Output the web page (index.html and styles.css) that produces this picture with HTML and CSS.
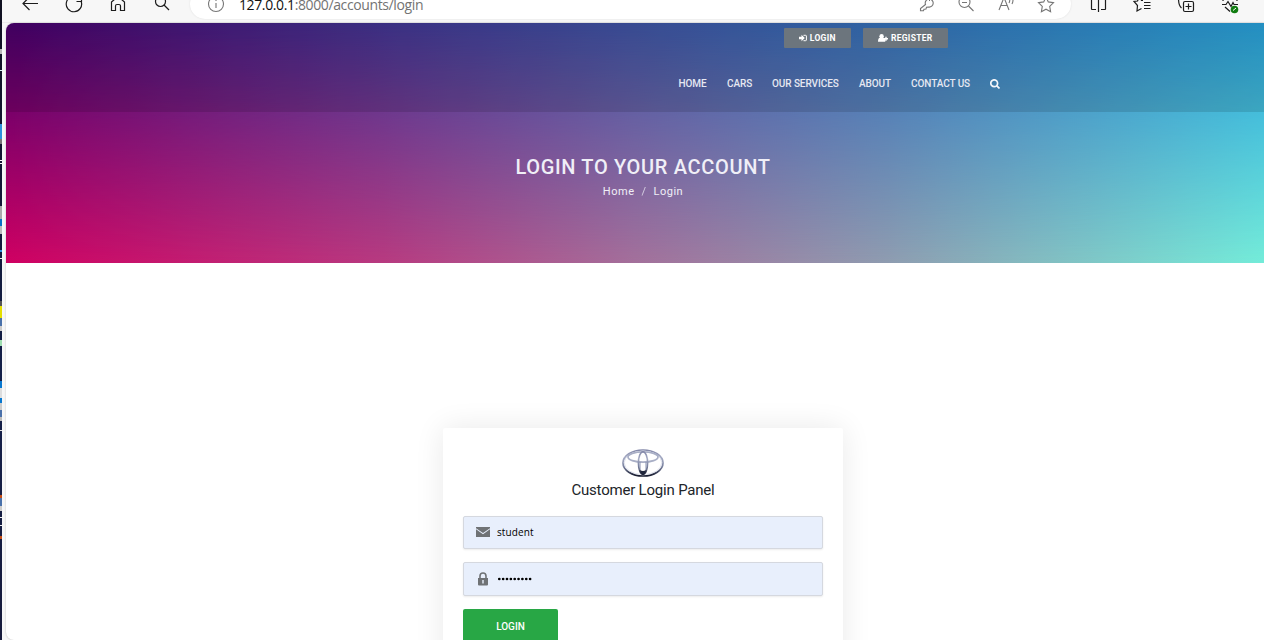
FILE: index.html
```html
<!DOCTYPE html>
<html lang="en">
<head>
<meta charset="utf-8">
<title>Login</title>
<link rel="stylesheet" href="styles.css">
</head>
<body>
<div class="screen">
  <div class="desktop-edge"></div>
  <div class="browser">
    <div class="chrome">
      <div class="toolbar">
        <svg class="tool dark" viewBox="0 0 20 20"><path d="M18 9.500H3M9.500 3L3 9.500l6.500 6.500"/></svg>
        <svg class="tool dark" viewBox="0 0 20 20"><path d="M17.200 7.500a7.700 7.700 0 1 1-3.200-4M17.500 2.500v5h-5"/></svg>
        <svg class="tool dark" viewBox="0 0 20 20"><path d="M3.500 8L10 2.500 16.500 8v8.500h-4V12a1.500 1.500 0 0 0-1.500-1.500H9A1.500 1.500 0 0 0 7.500 12v4.500h-4z"/></svg>
        <svg class="tool dark" viewBox="0 0 20 20"><circle cx="8.500" cy="7.500" r="5"/><path d="M12 11l5 5"/></svg>
        <div class="address">
          <svg class="tool" viewBox="0 0 20 20"><circle cx="10" cy="10" r="7.500"/><path d="M10 9v5M10 5.500v1.500"/></svg>
          <div class="url"><b>127.0.0.1</b>:8000/accounts/login</div>
          <svg class="tool" viewBox="0 0 20 20"><path d="M9.500 10.500a4 4 0 1 1 3 2.500l-2 .2-.5 1.800-2 .2-.5 1.500H4.500V14.500zM13 6.500h1"/></svg>
          <svg class="tool" viewBox="0 0 20 20"><circle cx="8.500" cy="8" r="5.500"/><path d="M12.500 12l5 5M6 8.500h5"/></svg>
          <svg class="tool" viewBox="0 0 20 20"><path d="M3 16L8 3.500 13 16M5 11.500h6M13 4q1.500 2 0 5M16 3q2 3 0 7"/></svg>
          <svg class="tool" viewBox="0 0 20 20"><path d="M10 3l2.300 4.900 5.200.8-3.800 3.700.9 5.300-4.600-2.500-4.600 2.500.9-5.300L2.500 8.700l5.200-.8z"/></svg>
        </div>
        <svg class="tool dark" viewBox="0 0 20 20"><path d="M8 3.500H3.500V15q0 .5.500.5h4M13 3.500h4.500V15q0 .5-.5.500h-4M10.500 2v16"/></svg>
        <svg class="tool dark" viewBox="0 0 20 20"><path d="M11 6.500H9.500L7.500 2.500 5.500 7l-3.500.5L5.500 11.500l-.5 5.500 4.500-2.500M12 8.500h6.500M12 11.500h6.500M12 14.500h6.500"/></svg>
        <svg class="tool dark" viewBox="0 0 20 20"><path d="M9 7.500h7q1.500 0 1.500 1.500v7q0 1.500-1.500 1.500H9q-1.500 0-1.500-1.500V9q0-1.500 1.500-1.500zM12.500 9.500v6M9.500 12.500h6M2.500 4.500q0 7 3 9.500"/></svg>
        <svg class="tool dark" viewBox="0 0 20 20"><path d="M2 10.500h4l2-3 3 5 2-4 1 2h4M5 13l5 4.500M3 7q0-5 7-3 7-2 7 3"/><circle class="ok" cx="14.500" cy="15.500" r="3.800"/><path class="tick" d="M13 16.500l3-2.500"/></svg>
      </div>
    </div>
    <div class="page">
      <header class="hero">
        <div class="topbar">
          <div class="auth">
            <a class="pill-btn"><svg class="fa-in" viewBox="0 0 8 8"><path d="M0 2.800h2.500V.8L5.800 4 2.500 7.200v-2H0z"/><path class="line" d="M4.500 1.300h2q.9 0 .9.700v4q0 .7-.9.700h-2"/></svg><span>LOGIN</span></a>
            <a class="pill-btn register"><svg class="fa-user" viewBox="0 0 10 8"><circle cx="3.600" cy="2.200" r="2.200"/><path d="M0 7.700q0-3.900 2-3.900h3.300q2 0 2 3.900zM6 4h4v1.400H6zM7.300 2.700h1.400v4H7.300z"/></svg><span>REGISTER</span></a>
          </div>
          <nav class="nav">
            <a class="n1">HOME</a><a class="n2">CARS</a><a class="n3">OUR SERVICES</a><a class="n4">ABOUT</a><a class="n5">CONTACT US</a>
            <svg class="fa-search" viewBox="0 0 10 10"><circle cx="4.200" cy="4.200" r="3.400"/><path d="M6.600 6.600L9.500 9.500"/></svg>
          </nav>
        </div>
        <div class="banner">
          <h1>LOGIN TO YOUR ACCOUNT</h1>
          <div class="crumbs"><span>Home</span><i>/</i><span>Login</span></div>
        </div>
      </header>
      <main class="content">
        <form class="card">
          <svg class="logo" viewBox="0 0 42 28">
            <defs>
              <linearGradient id="m" x1="0" y1="0" x2="0" y2="1"><stop offset="0" stop-color="#8287a8"/><stop offset=".3" stop-color="#a5abc4"/><stop offset=".65" stop-color="#777f9d"/><stop offset="1" stop-color="#15192d"/></linearGradient>
            </defs>
            <g fill="none">
              <ellipse cx="21" cy="14" rx="20" ry="13" stroke="url(#m)" stroke-width="1.700"/>
              <ellipse cx="21" cy="13.800" rx="18.800" ry="11.800" stroke="#d5d9e6" stroke-width=".8"/>
              <ellipse cx="21" cy="8" rx="15" ry="5.200" stroke="#a9afc6" stroke-width="1.700"/>
              <ellipse cx="21" cy="14" rx="4.600" ry="11.300" stroke="url(#m)" stroke-width="1.600"/>
              <path d="M18 13v8M24 13v8" stroke="#8790b0" stroke-width="1"/>
            </g>
            <path d="M18 21q3 2 6 0-.5 4.500-3 5-2.500-.5-3-5z" fill="#20263c"/>
          </svg>
          <h2>Customer Login Panel</h2>
          <div class="field">
            <svg class="mail" viewBox="0 0 14 10"><path d="M0 0h14v1.200L7 6 0 1.200z"/><path d="M0 2.300L7 7.200l7-4.900V10H0z"/></svg>
            <span>student</span>
          </div>
          <div class="field pass">
            <svg class="lock" viewBox="0 0 14 14"><path fill-rule="evenodd" d="M2 6h10v6.500q0 1-1 1H3q-1 0-1-1zM6.300 8v3.500h1.400V8z"/><path class="shackle" d="M4 6.500V4a3 3 0 0 1 6 0v2.500"/></svg>
            <svg class="dots" viewBox="0 0 36 4"><path d="M2.300 2h31"/></svg>
          </div>
          <a class="submit">LOGIN</a>
        </form>
      </main>
    </div>
  </div>
</div>
</body>
</html>
```
FILE: styles.css
```css
* { box-sizing: border-box; }
body { margin: 0; font-family: Roboto, sans-serif; overflow: hidden; }
svg { display: block; flex: none; }
.screen { display: flex; width: 1264px; height: 640px; overflow: hidden; background: #f7f7f7; }
.desktop-edge {
  width: 2px; flex: none;
  background: linear-gradient(#0000 49px, #b9b9b9 49px 54px, #0000 54px 70px, #d7f3f5 70px 71px, #0000 71px 124px, #2c91dc 124px 139px, #777 139px 144px, #0000 144px 160px, #fff 160px 161px, #0000 161px 163px, #fff 163px 164px, #0000 164px 206px, #aaa 206px 219px, #0872c4 219px 226px, #bbb 226px 234px, #0000 234px 250px, #2c91dc 250px 252px, #0000 252px 258px, #eee 258px 259px, #0000 259px 301px, #555 301px 306px, #e5df00 306px 318px, #4a71aa 318px 326px, #ccc 326px 331px, #0000 331px 340px, #9edeb0 340px 346px, #0000 346px 381px, #0878d0 381px 388px, #ddd 388px 398px, #0878d0 398px 403px, #ccc 403px 410px, #4a71aa 410px 417px, #bbb 417px 421px, #0000 421px 430px, #ddd 430px 431px, #0000 431px 495px, #c54c13 495px 498px, #4a71aa 498px 506px, #ccc 506px 511px, #0000 511px 517px, #eee 517px 518px, #0000 518px 525px, #eee 525px 526px, #0000 526px 536px, #c54c13 536px 539px, #0000 539px),
    linear-gradient(#101020, #14204a 60%, #171b3c);
}
.browser { flex: 1; min-width: 0; display: flex; flex-direction: column; }
.chrome { height: 23px; flex: none; overflow: hidden; border-bottom: 1px solid #ececec; }
.toolbar { height: 38px; margin-top: -15px; padding-left: 18px; display: flex; align-items: center; gap: 24px; }
.tool { width: 20px; height: 20px; fill: none; stroke: #767676; stroke-width: 1.1; }
.tool.dark { stroke: #1c1c1c; stroke-width: 1.2; }
.tool .ok { fill: #107c10; stroke: none; }
.tool .tick { stroke: #fff; stroke-width: 1; }
.address { width: 881px; height: 30px; margin: 0 -7px 0 -6px; padding: 0 15px 0 16px; border-radius: 15px; background: #fff; box-shadow: 0 0 2px #ddd; display: flex; align-items: center; gap: 20px; flex: none; }
.url { flex: 1; margin-left: -7px; padding-top: 1px; font: 14px/20px "Open Sans", sans-serif; color: #737373; letter-spacing: -.38px; white-space: nowrap; }
.url b { font-weight: 400; color: #111; }
.page { flex: 1; min-height: 0; margin-left: 4px; background: #fff; border-radius: 8px 0 0 8px; overflow: hidden; box-shadow: 0 0 2px #bbb; }
.hero { position: relative; height: 240px; background: linear-gradient(90deg, #4a006e, #433a97 32%, #4056a7 50%, #3672bb 70%, #29a3dd); }
.hero::before { content: ""; position: absolute; inset: 0; background: linear-gradient(90deg, #d00062, #b83a80 30%, #a4709b 50%, #8f9cb0 70%, #74ecd9); -webkit-mask-image: linear-gradient(transparent, #000); mask-image: linear-gradient(transparent, #000); }
.topbar { position: relative; height: 89px; padding-top: 5px; background: rgba(0,0,0,.12); }
.auth { display: flex; gap: 12px; margin-left: 778px; }
.pill-btn { width: 67px; height: 20px; border-radius: 1px; background: #6c757d; color: #fff; font-weight: 700; font-size: 8.5px; letter-spacing: .3px; display: flex; align-items: center; justify-content: center; gap: 2.500px; }
.pill-btn.register { width: 85px; }
.fa-in { width: 8px; height: 8px; fill: #fff; }
.fa-in .line { fill: none; stroke: #fff; }
.fa-user { width: 10px; height: 8px; fill: #fff; }
.nav { display: flex; align-items: center; gap: 20px; margin: 29px 0 0 672.500px; height: 14px; font-weight: 500; font-size: 10px; line-height: 14px; letter-spacing: -.08px; color: #e6e8f2; white-space: nowrap; }
.n1 { width: 28.500px; } .n2 { width: 25px; } .n3 { width: 67px; } .n4 { width: 32px; } .n5 { width: 60px; }
.fa-search { width: 10px; height: 10px; margin-left: -1px; fill: none; stroke: #f4f5fa; stroke-width: 1.7; }
.banner { position: relative; padding-top: 43px; margin-left: 16px; text-align: center; color: #f0eff7; }
h1 { margin: 0; font-weight: 500; font-size: 20px; line-height: 24px; letter-spacing: .67px; }
.crumbs { display: flex; justify-content: center; gap: 7px; margin-top: 6px; font-size: 11px; line-height: 14px; font-weight: 400; letter-spacing: .5px; }
.crumbs i { font-style: normal; opacity: .75; }
.content { padding: 165px 0 0 437px; }
.card { width: 400px; height: 300px; padding: 20px; border-radius: 2px; background: #fff; box-shadow: 0 0 30px rgba(0,0,0,.09); }
.logo { width: 42px; height: 28px; margin: 1px auto 0 159px; }
h2 { margin: 3px 0 16px; text-align: center; font-weight: 400; font-size: 15px; line-height: 20px; letter-spacing: -.2px; color: #212529; }
.field { display: flex; align-items: center; height: 33px; padding-left: 12px; gap: 7px; background: #e8effc; border: 1px solid #d5d8df; border-radius: 2px; box-shadow: 0 1px 2px rgba(0,0,0,.08); font: 10px/14px "Open Sans", sans-serif; letter-spacing: .1px; color: #000; }
.field.pass { height: 34px; margin: 13px 0; }
.field span { margin-top: -1px; }
.mail { width: 14px; height: 10px; margin-top: -1px; fill: #6f7275; }
.lock { width: 14px; height: 14px; fill: #6f7275; }
.shackle { fill: none; stroke: #6f7275; stroke-width: 1.6; }
.dots { width: 36px; height: 4px; stroke: #000; stroke-width: 2.7; stroke-linecap: round; stroke-dasharray: 0 3.850; }
.submit { display: block; width: 95px; height: 36px; border-radius: 2px; background: #28a745; color: #fff; font-weight: 500; font-size: 10px; line-height: 35px; text-align: center; }
```
